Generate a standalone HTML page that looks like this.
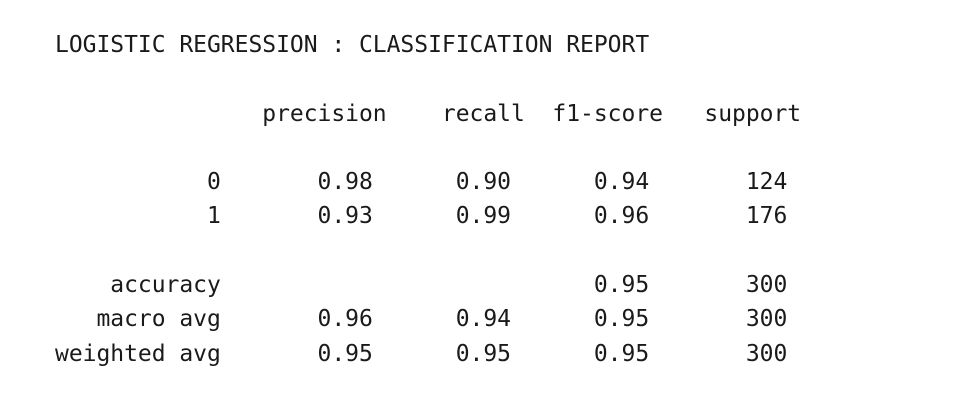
<!DOCTYPE html>
<html><head><meta charset="utf-8"><style>
html,body{margin:0;padding:0;background:#fff;width:969px;height:413px;overflow:hidden}
pre{margin:0;padding:28px 0 0 55px;font-family:"DejaVu Sans Mono","Liberation Mono",monospace;font-size:23px;line-height:34.3px;color:#1a1a1a;letter-spacing:-0.03px}
</style></head><body><pre>LOGISTIC REGRESSION : CLASSIFICATION REPORT

               precision    recall  f1-score   support

           0       0.98      0.90      0.94       124
           1       0.93      0.99      0.96       176

    accuracy                           0.95       300
   macro avg       0.96      0.94      0.95       300
weighted avg       0.95      0.95      0.95       300
</pre></body></html>
